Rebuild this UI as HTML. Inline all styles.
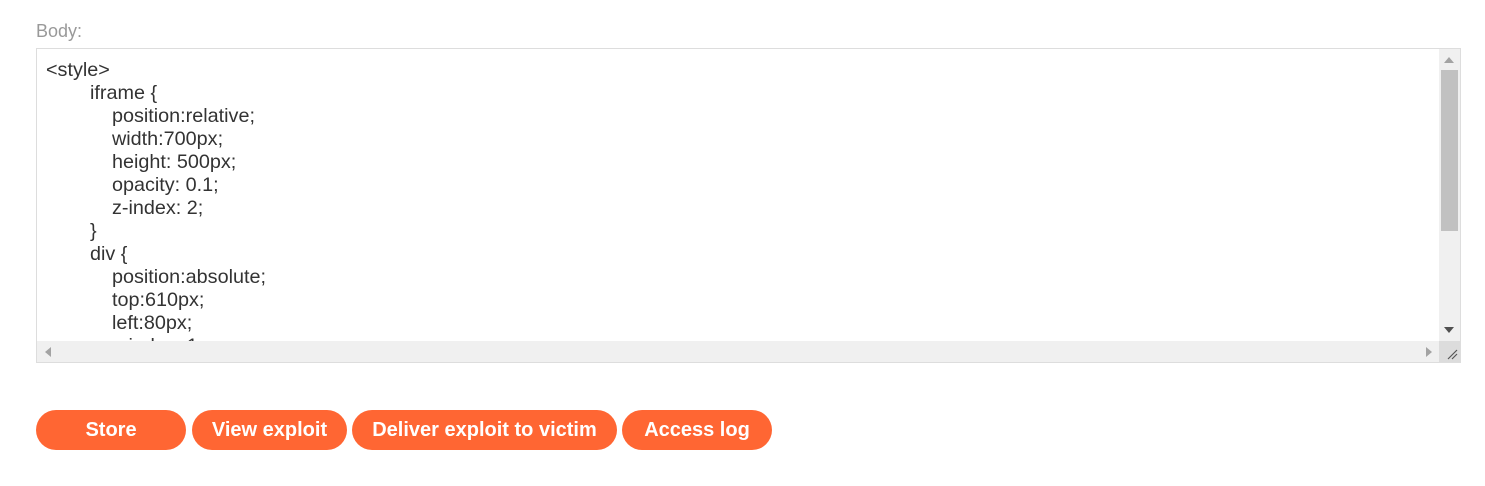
<!DOCTYPE html>
<html><head><style>
body{margin:0;width:1485px;height:486px;background:#fff;font-family:"Liberation Sans",Arial,sans-serif;position:relative;overflow:hidden}
.lbl{position:absolute;left:36px;top:21px;font-size:18px;color:#999}
.ta{position:absolute;left:36px;top:48px;width:1423px;height:313px;border:1px solid #ddd;overflow:hidden;background:#fff}
.code{position:absolute;left:9px;top:10px;font-size:19.8px;line-height:23px;color:#333;white-space:pre}
.code div{height:23px}
.a{padding-left:44px}.b{padding-left:66px}
.vs{position:absolute;right:0;top:0;width:21px;height:292px;background:#f0f0f0}
.thumb{position:absolute;left:2px;top:21px;width:17px;height:161px;background:#c1c1c1}
.hs{position:absolute;left:0;bottom:0;width:1402px;height:21px;background:#f0f0f0}
.corner{position:absolute;right:0;bottom:0;width:21px;height:21px;background:#dcdcdc}
.btn{position:absolute;top:410px;height:40px;border-radius:20px;background:#ff6633;color:#fff;font-weight:bold;font-size:20px;line-height:40px;text-align:center}
</style></head><body>
<div class="lbl">Body:</div>
<div class="ta">
<div class="code"><div>&lt;style&gt;</div><div class="a">iframe {</div><div class="b">position:relative;</div><div class="b">width:700px;</div><div class="b">height: 500px;</div><div class="b">opacity: 0.1;</div><div class="b">z-index: 2;</div><div class="a">}</div><div class="a">div {</div><div class="b">position:absolute;</div><div class="b">top:610px;</div><div class="b">left:80px;</div><div class="b">z-index: 1;</div></div>
<div class="vs"><div class="thumb"></div>
<svg style="position:absolute;left:5px;top:8px" width="10" height="6"><path d="M0 6 L5 0 L10 6Z" fill="#a3a3a3"/></svg>
<svg style="position:absolute;left:5px;top:278px" width="10" height="6"><path d="M0 0 L5 6 L10 0Z" fill="#505050"/></svg>
</div>
<div class="hs">
<svg style="position:absolute;left:8px;top:6px" width="6" height="10"><path d="M6 0 L0 5 L6 10Z" fill="#a3a3a3"/></svg>
<svg style="position:absolute;left:1389px;top:6px" width="6" height="10"><path d="M0 0 L6 5 L0 10Z" fill="#a3a3a3"/></svg>
</div>
<div class="corner"><svg width="21" height="21"><path d="M9 18 L18 9 M13 18 L18 13" stroke="#555" stroke-width="1.2"/></svg></div>
</div>
<div class="btn" style="left:36px;width:150px">Store</div>
<div class="btn" style="left:192px;width:155px">View exploit</div>
<div class="btn" style="left:352px;width:265px">Deliver exploit to victim</div>
<div class="btn" style="left:622px;width:150px">Access log</div>
</body></html>
